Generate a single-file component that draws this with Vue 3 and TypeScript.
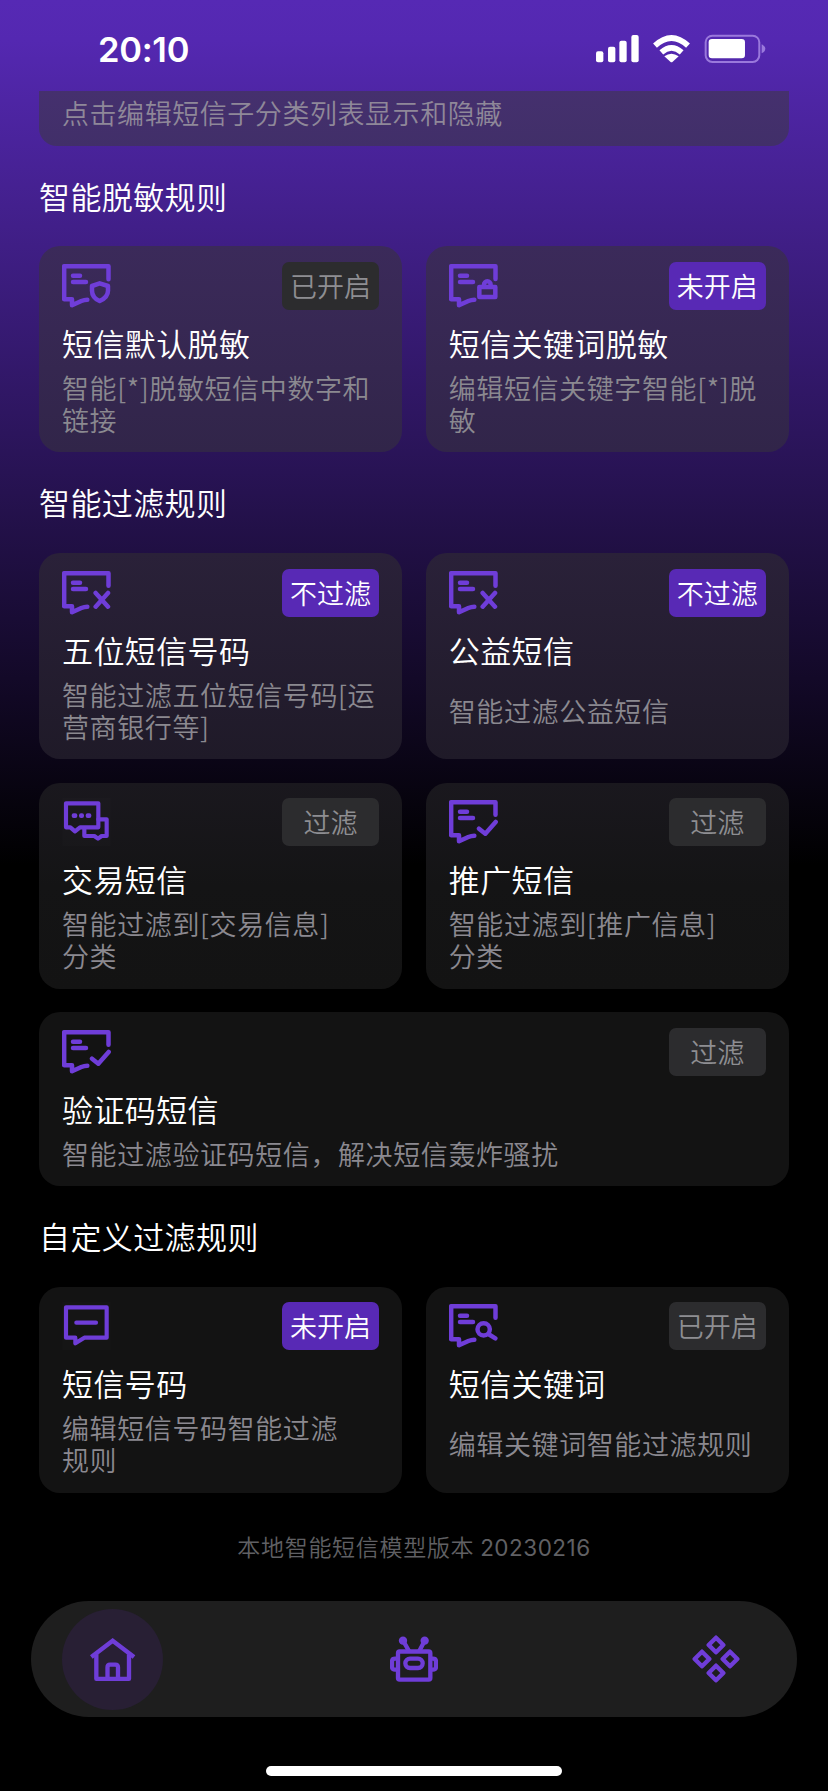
<script setup lang="ts">
type IconName = 'shield' | 'lock' | 'cross' | 'check' | 'search' | 'chats' | 'minus'

interface Rule {
  icon: IconName
  badge: string
  active: boolean
  title: string
  lines: string[]
  wide?: boolean
}

interface Section {
  heading: string
  tone: string
  rules: Rule[]
}

const sections: Section[] = [
  {
    heading: '智能脱敏规则',
    tone: 'tone-high',
    rules: [
      { icon: 'shield', badge: '已开启', active: false, title: '短信默认脱敏', lines: ['智能[*]脱敏短信中数字和', '链接'] },
      { icon: 'lock', badge: '未开启', active: true, title: '短信关键词脱敏', lines: ['编辑短信关键字智能[*]脱', '敏'] },
    ],
  },
  {
    heading: '智能过滤规则',
    tone: 'tone-mid',
    rules: [
      { icon: 'cross', badge: '不过滤', active: true, title: '五位短信号码', lines: ['智能过滤五位短信号码[运', '营商银行等]'] },
      { icon: 'cross', badge: '不过滤', active: true, title: '公益短信', lines: ['智能过滤公益短信'] },
      { icon: 'chats', badge: '过滤', active: false, title: '交易短信', lines: ['智能过滤到[交易信息]', '分类'] },
      { icon: 'check', badge: '过滤', active: false, title: '推广短信', lines: ['智能过滤到[推广信息]', '分类'] },
      { icon: 'check', badge: '过滤', active: false, title: '验证码短信', lines: ['智能过滤验证码短信，解决短信轰炸骚扰'], wide: true },
    ],
  },
  {
    heading: '自定义过滤规则',
    tone: 'tone-low',
    rules: [
      { icon: 'minus', badge: '未开启', active: true, title: '短信号码', lines: ['编辑短信号码智能过滤', '规则'] },
      { icon: 'search', badge: '已开启', active: false, title: '短信关键词', lines: ['编辑关键词智能过滤规则'] },
    ],
  },
]

const bubbleEnd: Record<string, number> = { shield: 52, lock: 51, cross: 50, check: 50, search: 47 }
</script>

<template>
  <div class="screen">
    <header class="status">
      <span class="time">20:10</span>
      <svg class="indicators" viewBox="42 30 528 110" width="176" height="36.67">
        <g fill="#fff">
          <rect x="48" y="94" width="22" height="33" rx="6" />
          <rect x="84" y="80" width="22" height="47" rx="6" />
          <rect x="118" y="62" width="22" height="65" rx="6" />
          <rect x="154" y="45" width="22" height="82" rx="6" />
          <path d="M253 109Q274 94 296 109L278 125Q274.500 128 271 125Z" />
          <rect x="386" y="57" width="109" height="58" rx="10" />
        </g>
        <g fill="none" stroke="#fff" stroke-width="17">
          <path d="M225 77Q274.500 31 324 77" />
          <path d="M244 97Q274.500 70 305 97" />
        </g>
        <rect x="377" y="47" width="161" height="79" rx="20" fill="none" stroke="#9a79dc" stroke-width="6" />
        <path d="M545 73Q556 78 556 86.500T545 100Z" fill="#9a79dc" />
      </svg>
    </header>

    <main class="content">
      <div class="peek"><span>点击编辑短信子分类列表显示和隐藏</span></div>

      <section v-for="s in sections" :key="s.heading">
        <h2 class="heading">{{ s.heading }}</h2>
        <div class="grid" :class="s.tone">
          <article v-for="r in s.rules" :key="r.title" class="card" :class="{ wide: r.wide }">
            <div class="card-top">
              <svg class="icon" viewBox="0 0 147 144" width="49" height="48">
                <template v-if="r.icon === 'chats'">
                  <rect x="1" y="0" width="145" height="144" fill="#fff" fill-opacity="0.012" />
                  <g class="line thin">
                    <path d="M12 16H109V88H54L39 100L25 88H12Z" />
                    <path d="M109 64H134V114H119L108 122L97 114H67V90" />
                  </g>
                  <g class="solid">
                    <rect x="29" y="46" width="17" height="14" rx="6" />
                    <rect x="51" y="46" width="15" height="14" rx="6" />
                    <rect x="71" y="46" width="17" height="14" rx="6" />
                  </g>
                </template>
                <template v-else-if="r.icon === 'minus'">
                  <rect x="1" y="0" width="145" height="144" fill="#fff" fill-opacity="0.012" />
                  <g class="line thin">
                    <path d="M12 16H134V107H67L40 124V107H12Z" />
                    <path d="M43 62H102" />
                  </g>
                </template>
                <g v-else class="line" transform="translate(0 6)">
                  <path :d="`M139.500 ${bubbleEnd[r.icon] - 6}V6.500H6.500V106H30V124L58 111Q67 107 76 107`" />
                  <path d="M33 35H54M33 54H72" />
                  <path v-if="r.icon === 'shield'" d="M113 58L138 66V80C138 95 126 105 113 111C100 105 90 95 90 80V66Z" />
                  <path v-else-if="r.icon === 'lock'" d="M91 69H139V99H91ZM105 69V62A10 10 0 0 1 125 62V69" />
                  <path v-else-if="r.icon === 'cross'" d="M101 66L138 107M138 66L101 107" />
                  <path v-else-if="r.icon === 'check'" d="M90 86L109 101L140 66" />
                  <path v-else d="M122.500 76A18.500 18.500 0 1 1 85.500 76A18.500 18.500 0 1 1 122.500 76ZM118 90L139 103" />
                </g>
              </svg>
              <span class="badge" :class="{ active: r.active }">{{ r.badge }}</span>
            </div>
            <h3 class="title">{{ r.title }}</h3>
            <p class="desc"><span v-for="l in r.lines" :key="l">{{ l }}</span></p>
          </article>
        </div>
      </section>

      <p class="version">本地智能短信模型版本 <span class="digits">20230216</span></p>
    </main>

    <nav class="tabs">
      <a class="tab current">
        <svg viewBox="0 0 144 144" width="48" height="48" class="nav-line">
          <path d="M7 66L71 17L135 66" />
          <path d="M22 58V131.500H120V58" stroke-linejoin="round" />
          <path d="M55.500 131V97Q55.500 89 63 89H79Q87 89 87 97V131" />
        </svg>
      </a>
      <a class="tab">
        <svg viewBox="0 0 144 144" width="48" height="48" class="nav-line">
          <rect x="24" y="49.500" width="97" height="84.500" rx="5" />
          <rect x="46" y="71" width="52" height="28" rx="14" />
          <path d="M24 71H15Q6 71 6 80V95Q6 104 15 104H24M121 71H129Q138 71 138 80V95Q138 104 129 104H121M39 17L57 48M104 17L88 48" />
          <circle cx="39" cy="17" r="12.500" class="solid" stroke="none" />
          <circle cx="104" cy="17" r="12.500" class="solid" stroke="none" />
        </svg>
      </a>
      <a class="tab">
        <svg viewBox="0 0 144 144" width="48" height="48" class="nav-line">
          <path stroke-linejoin="round" d="M72 8L94 30L72 52L50 30ZM30 50L52 72L30 94L8 72ZM114 50L136 72L114 94L92 72ZM72 92L94 114L72 136L50 114Z" />
        </svg>
      </a>
    </nav>
    <div class="home-bar"></div>
  </div>
</template>

<style>
html,
body {
  margin: 0;
  background: #000;
}
</style>

<style scoped>
.screen {
  width: 828px;
  height: 1791px;
  overflow: hidden;
  display: flex;
  flex-direction: column;
  background: linear-gradient(180deg, #5629b4 0, #5428b1 40px, #000 865px);
  font-family: "Noto Sans CJK SC", sans-serif;
  font-weight: 350;
  color: #fff;
}
.status {
  height: 91px;
  flex: none;
  display: flex;
  justify-content: space-between;
  box-sizing: border-box;
  padding: 28px 58px 0 98px;
}
.time {
  font: 600 34.5px/44px Inter, sans-serif;
  letter-spacing: -0.3px;
}
.indicators {
  margin-top: 2px;
}
.content {
  flex: none;
  height: 1510px;
  padding: 0 39px;
}
.peek {
  height: 54.6px;
  background: linear-gradient(#45306e, #412f69);
  border-radius: 0 0 18px 18px;
  padding-left: 23px;
  font-size: 27px;
  letter-spacing: 0.55px;
  line-height: 44px;
  color: #8f8899;
}
.heading {
  margin: 0;
  height: 100.700px;
  line-height: 100px;
  font-size: 31px;
  letter-spacing: 0.4px;
  font-weight: 350;
}
.grid {
  display: grid;
  grid-template-columns: 1fr 1fr;
  gap: 23.300px 23.500px;
}
.card {
  box-sizing: border-box;
  height: 206.200px;
  border-radius: 21px;
  padding: 15.700px 23.500px 16px 23px;
  display: flex;
  flex-direction: column;
  background: #131313;
}
.card.wide {
  grid-column: span 2;
  height: 173.700px;
}
.tone-high .card {
  background: linear-gradient(#3b2a5a, #312549);
}
.tone-mid .card:nth-child(-n + 2) {
  background: linear-gradient(#2a2139, #1f1a28);
}
.tone-mid .card:nth-child(3),
.tone-mid .card:nth-child(4) {
  background: linear-gradient(#1a181e, #141415 50%, #131313);
}
.card-top {
  display: flex;
  justify-content: space-between;
  height: 48px;
  flex: none;
}
.icon {
  display: block;
}
.line {
  fill: none;
  stroke: #6f3dd8;
  stroke-width: 13.500;
  stroke-linecap: round;
  stroke-linejoin: round;
}
.thin {
  stroke-width: 12.500;
}
.solid {
  fill: #6f3dd8;
}
.badge {
  width: 96.500px;
  height: 48px;
  border-radius: 7px;
  background: #2c2c2e;
  color: #8e8e92;
  font-size: 27px;
  line-height: 48px;
  text-align: center;
}
.badge.active {
  background: #5829b5;
  color: #fff;
}
.title {
  margin: 15px 0 0;
  height: 36px;
  line-height: 36px;
  font-size: 31px;
  letter-spacing: 0.4px;
  font-weight: 350;
  white-space: nowrap;
}
.desc {
  margin: 10.500px 0 0;
  flex: 1;
  display: flex;
  flex-direction: column;
  justify-content: center;
  font-size: 27px;
  letter-spacing: 0.6px;
  line-height: 32.100px;
  color: #8b8990;
  white-space: nowrap;
}
.version {
  margin: 0;
  height: 107px;
  line-height: 107px;
  font-size: 23px;
  letter-spacing: 0.7px;
  text-align: center;
  color: #606064;
}
.digits {
  font-family: Inter, sans-serif;
  font-size: 22.500px;
  font-weight: 400;
  letter-spacing: 0.5px;
}
.tabs {
  flex: none;
  width: 766px;
  height: 116px;
  box-sizing: border-box;
  margin: 0 31px;
  padding: 0 31px;
  border-radius: 58px;
  background: #1e1e1e;
  display: flex;
  align-items: center;
  justify-content: space-between;
}
.tab {
  width: 101px;
  height: 101px;
  border-radius: 50%;
  display: flex;
  align-items: center;
  justify-content: center;
}
.tab.current {
  background: #281f34;
}
.nav-line {
  fill: none;
  stroke: #6f3dd8;
  stroke-width: 13;
}
.nav-line .solid {
  fill: #6f3dd8;
}
.home-bar {
  flex: none;
  width: 296px;
  height: 10px;
  margin: 48.500px auto 0;
  border-radius: 5px;
  background: #fff;
}
</style>
